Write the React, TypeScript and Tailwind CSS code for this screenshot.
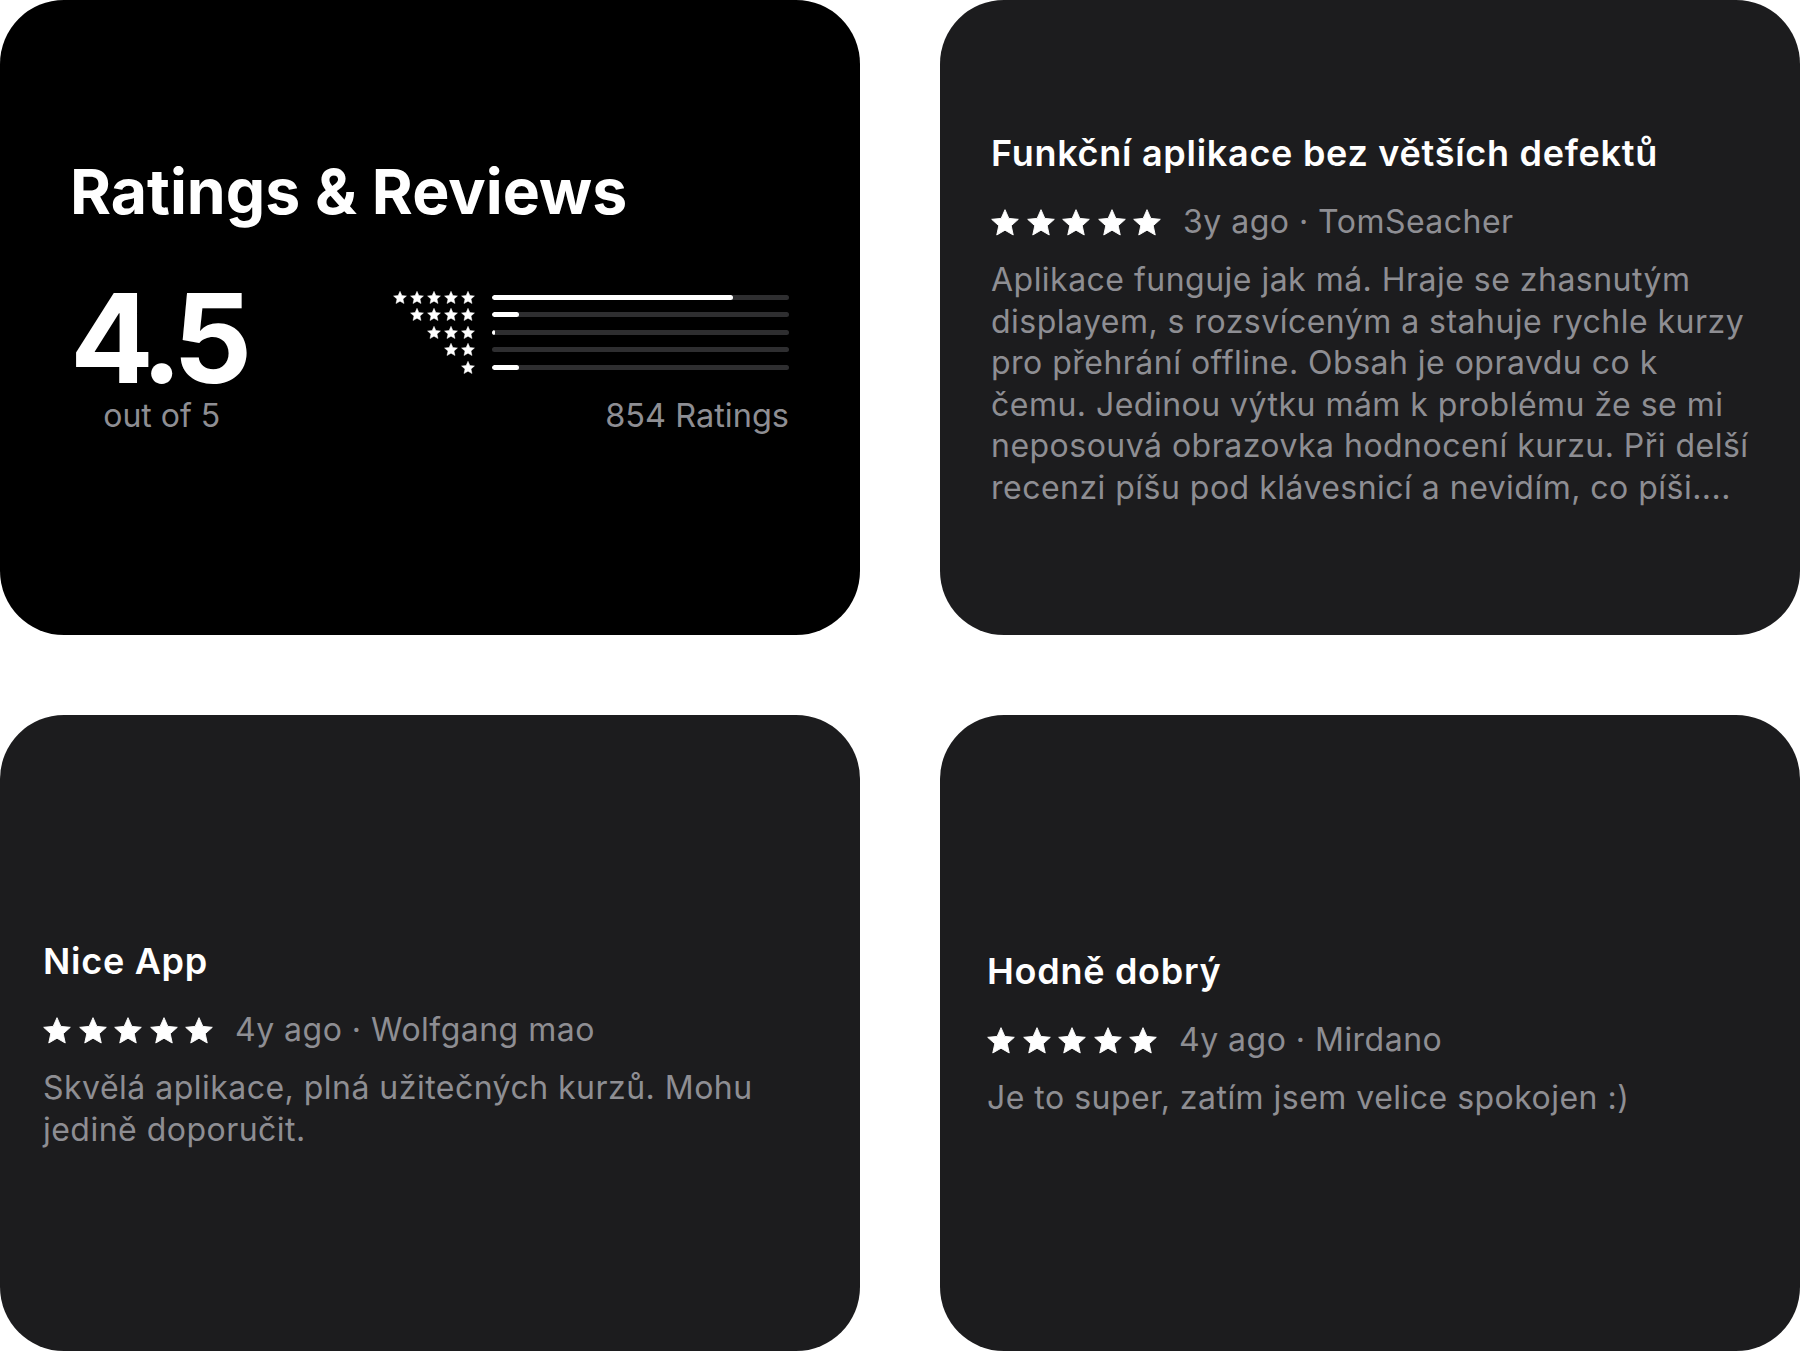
import React from "react";

type Review = {
  title: string;
  age: string;
  author: string;
  lines: string[];
  pad: string;
};

const reviews: Review[] = [
  {
    title: "Funkční aplikace bez větších defektů",
    age: "3y ago",
    author: "TomSeacher",
    lines: [
      "Aplikace funguje jak má. Hraje se zhasnutým",
      "displayem, s rozsvíceným a stahuje rychle kurzy",
      "pro přehrání offline. Obsah je opravdu co k",
      "čemu. Jedinou výtku mám k problému že se mi",
      "neposouvá obrazovka hodnocení kurzu. Při delší",
      "recenzi píšu pod klávesnicí a nevidím, co píši....",
    ],
    pad: "pl-[51px] pt-[135px]",
  },
  {
    title: "Nice App",
    age: "4y ago",
    author: "Wolfgang mao",
    lines: ["Skvělá aplikace, plná užitečných kurzů. Mohu", "jedině doporučit."],
    pad: "pl-[43px] pt-[228px]",
  },
  {
    title: "Hodně dobrý",
    age: "4y ago",
    author: "Mirdano",
    lines: ["Je to super, zatím jsem velice spokojen :)"],
    pad: "pl-[47px] pt-[238px]",
  },
];

// histogram: share of each star count, 5 -> 1
const distribution = [81, 9, 1, 0, 9];

function Star({ className }: { className?: string }) {
  return (
    <svg viewBox="0 0 24 23" className={className} fill="currentColor">
      <polygon
        points="12,0.5 15.29,7.97 23.41,8.79 17.33,14.23 19.05,22.21 12,18.1 4.95,22.21 6.67,14.23 0.59,8.79 8.71,7.97"
        stroke="currentColor"
        strokeWidth="0.8"
        strokeLinejoin="round"
      />
    </svg>
  );
}

function RatingsCard() {
  return (
    <div className="bg-black rounded-[64px] pl-[70px] pr-[71px] pt-[160px] text-white">
      <h2 className="text-[62.5px] font-bold leading-none">Ratings &amp; Reviews</h2>
      <div className="mt-[57px] flex justify-between items-start">
        {/* average score */}
        <div className="flex flex-col items-center">
          <div className="text-[124px] font-bold leading-[116px] tracking-[-0.07em]">4.5</div>
          <div className="mt-[4px] ml-[10px] text-[32px] leading-none text-[#8e8e93]">out of 5</div>
        </div>

        {/* distribution bars */}
        <div className="mt-[9px] flex flex-col">
          {distribution.map((pct, i) => (
            <div key={i} className="flex items-center h-[17.5px]">
              <div className="w-[82px] flex justify-end gap-[3px]">
                {Array.from({ length: 5 - i }).map((_, s) => (
                  <Star key={s} className="w-[14px] h-[13px]" />
                ))}
              </div>
              <div className="ml-[17px] w-[297px] h-[5px] rounded-full bg-[#2e2e30] overflow-hidden">
                <div className="h-full rounded-full bg-white" style={{ width: `${pct}%` }} />
              </div>
            </div>
          ))}
          <div className="mt-[24px] text-right text-[32.5px] leading-none text-[#8e8e93]">854 Ratings</div>
        </div>
      </div>
    </div>
  );
}

function ReviewCard({ review }: { review: Review }) {
  return (
    <div className={`bg-[#1c1c1e] rounded-[64px] ${review.pad}`}>
      <h3 className="text-[36px] font-semibold leading-none tracking-[0.02em] text-white">{review.title}</h3>
      <div className="mt-[36px] h-[30px] flex items-center">
        <div className="flex gap-[7.5px] text-white">
          {Array.from({ length: 5 }).map((_, s) => (
            <Star key={s} className="w-[28px] h-[27px]" />
          ))}
        </div>
        <span className="ml-[22px] text-[32px] leading-none tracking-[0.015em] text-[#8e8e93]">
          {review.age} · {review.author}
        </span>
      </div>
      <div className="mt-[22px] text-[32px] leading-[41.6px] tracking-[0.015em] text-[#8e8e93]">
        {review.lines.map((line, i) => (
          <div key={i} className="whitespace-nowrap">
            {line}
          </div>
        ))}
      </div>
    </div>
  );
}

export default function App() {
  return (
    <div className="w-[1800px] h-[1351px] bg-white font-['Inter','Liberation_Sans',sans-serif] grid grid-cols-[860px_860px] grid-rows-[635px_636px] gap-x-[80px] gap-y-[80px]">
      <RatingsCard />
      <ReviewCard review={reviews[0]} />
      <ReviewCard review={reviews[1]} />
      <ReviewCard review={reviews[2]} />
    </div>
  );
}
